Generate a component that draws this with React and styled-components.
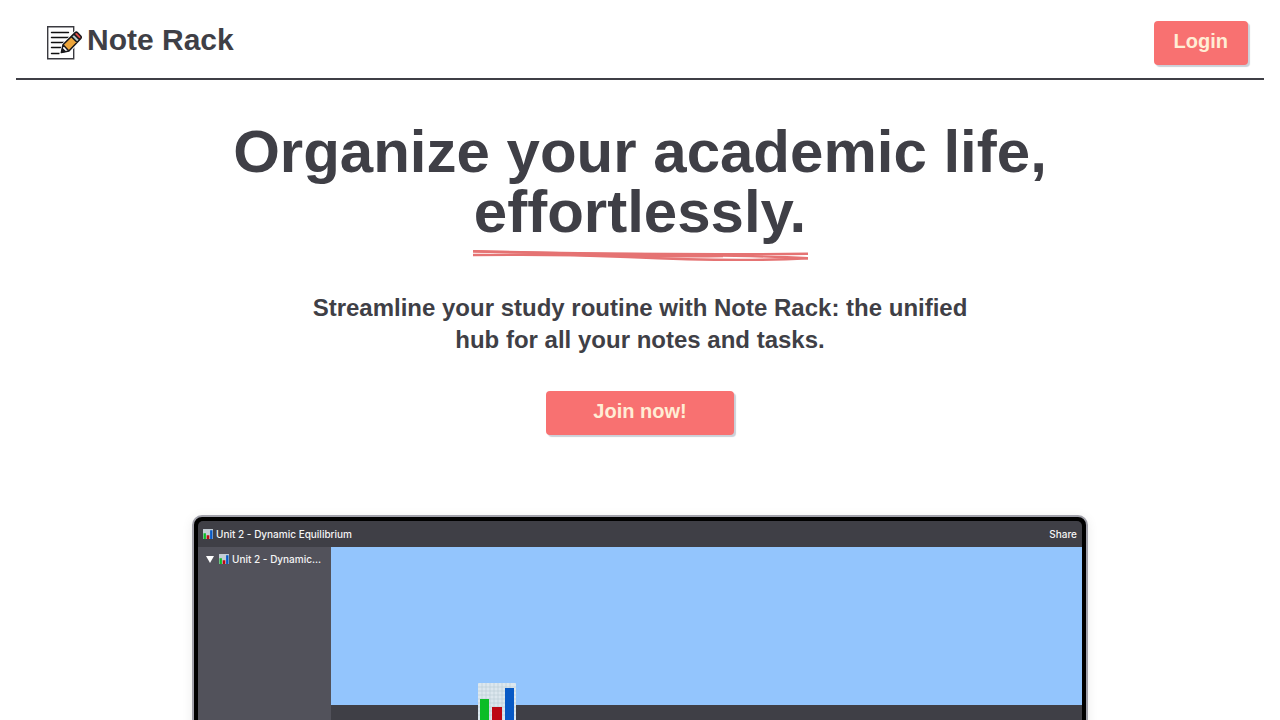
import React from 'react';
import styled, { createGlobalStyle } from 'styled-components';

const GlobalStyle = createGlobalStyle`
  *, *::before, *::after { box-sizing: border-box; }
  html { scrollbar-width: none; }
  body {
    margin: 0;
    background: #fff;
    color: #3f3f46;
    font-family: "Liberation Sans", Arial, sans-serif;
  }
`;

const Header = styled.header`
  display: flex;
  align-items: center;
  justify-content: space-between;
  height: 80px;
  margin: 0 16px;
  padding: 8px 16px 0 30px;
  border-bottom: 2px solid #3f3f46;
`;

const Brand = styled.a`
  display: flex;
  align-items: center;
  gap: 5px;
  color: inherit;
  font-size: 30px;
  font-weight: 700;
  line-height: 36px;
  text-decoration: none;
`;

const BrandName = styled.span`
  padding-bottom: 6px;
`;

const Button = styled.button`
  border: 0;
  border-radius: 4px;
  padding: 6px ${(p) => (p.$wide ? 47 : 20)}px 10px;
  background: #f87171;
  color: #ffedd5;
  box-shadow: 2px 2px 1px #cbd0d8;
  font: 700 20px/28px "Liberation Sans", Arial, sans-serif;
  cursor: pointer;
`;

const Hero = styled.main`
  display: flex;
  flex-direction: column;
  align-items: center;
  padding: 42px 16px 0;
  text-align: center;
`;

const Title = styled.h1`
  max-width: 896px;
  margin: 0;
  font-size: 60px;
  font-weight: 700;
  line-height: 60px;
`;

const Underlined = styled.span`
  display: inline-flex;
  flex-direction: column;
`;

const Scribble = styled.svg`
  display: block;
  width: 100%;
  height: 14px;
  margin-top: 6px;
`;

const Subtitle = styled.h2`
  max-width: 672px;
  margin: 30px 0 35px;
  font-size: 24px;
  font-weight: 700;
  line-height: 32px;
`;

const Preview = styled.section`
  width: 100%;
  max-width: 896px;
  margin: 80px 0 64px;
  border: 2px solid #a1a1aa;
  border-radius: 10px;
  background: #000;
  padding: 4px;
  box-shadow: 0 2px 12px rgba(0, 0, 0, 0.08);
  color: #f4f4f5;
  font: 500 10px/16px Inter, sans-serif;
  text-align: left;
`;

const Screen = styled.div`
  overflow: hidden;
  border-radius: 5px;
  background: #3f3f46;
`;

const TopBar = styled.div`
  display: flex;
  align-items: center;
  justify-content: space-between;
  height: 26px;
  padding: 0 5px;
`;

const PageLabel = styled.span`
  display: flex;
  align-items: center;
  gap: 3px;
  white-space: nowrap;
`;

const Workspace = styled.div`
  display: grid;
  grid-template-columns: 133px 1fr;
  min-height: 470px;
`;

const Sidebar = styled.nav`
  display: flex;
  align-items: flex-start;
  gap: 5px;
  padding: 4px 8px;
  background: #52525b;
`;

const Cover = styled.div`
  height: 158px;
  background: #93c5fd;
`;

const PageIcon = styled.div`
  display: flex;
  margin: -22px 0 0 147px;
`;

const Arrow = styled.svg`
  flex: none;
  margin-top: 4px;
`;

function NoteIcon() {
  return (
    <svg width="36" height="36" viewBox="0 0 36 36" aria-hidden="true">
      <path d="M1.7 1.7h26v32h-26z" fill="#fff" stroke="#3a3a40" strokeWidth="1.4" />
      <path d="M5.5 7.5h17M5.5 12.5h17M5.5 17.5h13M5.5 22.5h11M5.5 28.5h8" stroke="#111" strokeWidth="1.4" strokeLinecap="round" />
      <path d="M14.5 28.5l2.2-9L29 7l6.5 6.5L23 27z" fill="#fff" stroke="#fff" strokeWidth="2" />
      <path d="M17 19.8L25.2 11.4l6.1 6.1-8.4 8.4z" fill="#eda53a" />
      <path d="M25.2 11.4l2.6-2.5 6 6-2.5 2.6z" fill="#b9d0d0" />
      <path d="M27.8 8.9l1.4-1.3q1.2-1 2.4.1l3.1 3.2q1.1 1.3.1 2.5l-1 1.5z" fill="#df4d49" />
      <path d="M15.3 27.6l1.7-7.8L29.2 7.6q1.2-1 2.4.1l3.1 3.2q1.1 1.3.1 2.5L22.9 25.9zM25.2 11.4l6.1 6.1M27.8 8.9l6 6M17 19.8l5.9 6.1" fill="none" stroke="#18181b" strokeWidth="1.5" strokeLinejoin="round" />
      <path d="M15 28l1.2-5.6 4.2 4.3z" fill="#18181b" />
    </svg>
  );
}

function ChartIcon({ size, grid }) {
  return (
    <svg width={size} height={size} viewBox="0 0 38 38" aria-hidden="true">
      <rect width="38" height="38" rx="1" fill={grid ? '#dce7ee' : '#c3cdd5'} />
      {grid && (
        <path d="M0 4h38M0 8h38M0 12h38M0 16h38M0 20h38M0 24h38M0 28h38M0 32h38M4 0v38M8 0v38M12 0v38M16 0v38M20 0v38M24 0v38M28 0v38M32 0v38" stroke="#b9cad5" strokeWidth=".6" />
      )}
      <path d="M2 16h9v22H2z" fill="#0bbd26" />
      <path d="M14 24h10v14H14z" fill="#bd0713" />
      <path d="M27 5h9v33h-9z" fill="#0759c5" />
    </svg>
  );
}

export default function App() {
  return (
    <>
      <GlobalStyle />
      <Header>
        <Brand href="#">
          <NoteIcon />
          <BrandName>Note Rack</BrandName>
        </Brand>
        <Button type="button">Login</Button>
      </Header>
      <Hero>
        <Title>
          Organize your academic life,{' '}
          <Underlined>
            effortlessly.
            <Scribble viewBox="0 0 335 14" preserveAspectRatio="none" aria-hidden="true">
              <g fill="none" stroke="#e57373" strokeWidth="2.4">
                <path d="M0 3.2C75 5 205 7 335 5.8" />
                <path d="M0 7C65 7 80 6 155 9C220 12 285 13 335 10.2" />
                <path d="M0 3.2C110 7 235 5 335 10.2" />
                <path d="M60 6C150 8 200 9 250 8" />
              </g>
            </Scribble>
          </Underlined>
        </Title>
        <Subtitle>Streamline your study routine with Note Rack: the unified hub for all your notes and tasks.</Subtitle>
        <Button type="button" $wide>Join now!</Button>
        <Preview>
          <Screen>
            <TopBar>
              <PageLabel><ChartIcon size={10} />Unit 2 - Dynamic Equilibrium</PageLabel>
              <span>Share</span>
            </TopBar>
            <Workspace>
              <Sidebar>
                <Arrow width="8" height="8" viewBox="0 0 8 8" aria-hidden="true">
                  <path d="M0 1h8L4 8z" fill="#fff" />
                </Arrow>
                <PageLabel><ChartIcon size={10} />Unit 2 - Dynamic...</PageLabel>
              </Sidebar>
              <div>
                <Cover />
                <PageIcon><ChartIcon size={38} grid /></PageIcon>
              </div>
            </Workspace>
          </Screen>
        </Preview>
      </Hero>
    </>
  );
}
